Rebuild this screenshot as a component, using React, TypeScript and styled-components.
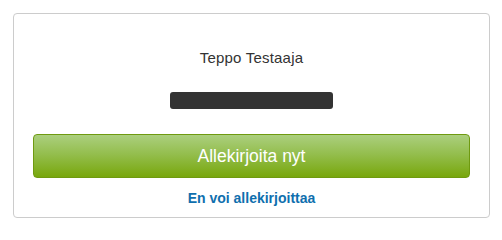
import React from "react";
import styled, { createGlobalStyle } from "styled-components";

const Global = createGlobalStyle`
  html, body { margin: 0; padding: 0; background: #fff; }
  body { font-family: "Liberation Sans", Arial, sans-serif; }
`;

const Page = styled.div`
  padding: 13px 12px 0 13px;
`;

const Card = styled.div`
  width: 477px;
  height: 205px;
  box-sizing: border-box;
  border: 1px solid #cccccc;
  border-radius: 4px;
  background: #fff;
  display: flex;
  flex-direction: column;
  align-items: center;
  padding: 34px 19px 0;
`;

const Name = styled.div`
  font-size: 15px;
  letter-spacing: 0.2px;
  line-height: 20px;
  color: #333;
`;

const Redacted = styled.div`
  width: 163px;
  height: 17px;
  margin-top: 24px;
  border-radius: 3px;
  background: #333333;
`;

const SignButton = styled.button`
  margin-top: 25px;
  width: 100%;
  height: 44px;
  box-sizing: border-box;
  border: 1px solid #6f9a10;
  border-radius: 4px;
  background: linear-gradient(to bottom, #abcf7e 0%, #94be4e 45%, #78a70c 100%);
  color: #fff;
  font-family: "Liberation Sans", Arial, sans-serif;
  font-size: 17.5px;
  cursor: pointer;
  padding: 0;
`;

const DeclineLink = styled.a`
  margin-top: 12px;
  font-size: 14px;
  line-height: 16px;
  font-weight: bold;
  color: #0f6fae;
  text-decoration: none;
  cursor: pointer;
`;

export default function App() {
  return (
    <>
      <Global />
      <Page>
        <Card>
          <Name>Teppo Testaaja</Name>
          <Redacted />
          <SignButton>Allekirjoita nyt</SignButton>
          <DeclineLink>En voi allekirjoittaa</DeclineLink>
        </Card>
      </Page>
    </>
  );
}
